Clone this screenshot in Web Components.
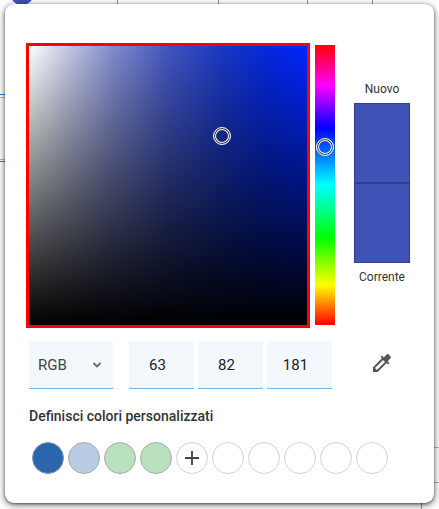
<!DOCTYPE html>
<html lang="it">
<head>
<meta charset="utf-8">
<title>Colori</title>
<style>
  html, body { margin: 0; height: 100%; overflow: hidden; background: #fff; }
  body { font-family: Roboto, "Liberation Sans", sans-serif; }
</style>
</head>
<body>
<page-backdrop>
  <color-dialog>
    <color-square slot="square"></color-square>
    <hue-strip slot="hue"></hue-strip>
    <color-preview slot="preview" color="#3f52b5"></color-preview>
    <mode-select slot="controls">RGB</mode-select>
    <color-field slot="controls">63</color-field>
    <color-field slot="controls">82</color-field>
    <color-field slot="controls">181</color-field>
    <eye-dropper slot="controls"></eye-dropper>
    <span slot="title">Definisci colori personalizzati</span>
    <color-swatch slot="swatches" color="#2b65ac" border="#8a9bb0"></color-swatch>
    <color-swatch slot="swatches" color="#b7cbe4" border="#adadad"></color-swatch>
    <color-swatch slot="swatches" color="#b9e1bd" border="#adadad"></color-swatch>
    <color-swatch slot="swatches" color="#b9e1bd" border="#adadad"></color-swatch>
    <color-swatch slot="swatches" add></color-swatch>
    <color-swatch slot="swatches"></color-swatch>
    <color-swatch slot="swatches"></color-swatch>
    <color-swatch slot="swatches"></color-swatch>
    <color-swatch slot="swatches"></color-swatch>
    <color-swatch slot="swatches"></color-swatch>
  </color-dialog>
</page-backdrop>

<script>
class PageBackdrop extends HTMLElement {
    constructor() {
        super();
        this.attachShadow({ mode: "open" });
        this.shadowRoot.innerHTML = `
        <style>
            :host { display: block; position: relative; width: 439px; height: 509px; overflow: hidden; background: #fff; }
            .v, .h, .dot { position: absolute; }
            .v { width: 1px; background: #8f8f8f; }
            .h { height: 1px; background: #b8b8b8; }
            .blue { background: #2f86c9; }
            .dot { left: 10px; top: -19px; width: 24px; height: 24px; border-radius: 50%; background: #3f52b5; }
            .dialog { position: absolute; left: 5px; top: 4px; }
        </style>
        <div class="dot"></div>
        <div class="v" style="left:117px;top:0;height:4px"></div>
        <div class="v" style="left:218px;top:0;height:4px"></div>
        <div class="v" style="left:307px;top:0;height:4px"></div>
        <div class="v" style="left:372px;top:0;height:4px"></div>
        <div class="v" style="left:421px;top:503px;height:6px"></div>
        <div class="h blue" style="left:0;top:94px;width:5px"></div>
        <div class="h blue" style="left:0;top:161px;width:5px"></div>
        <div class="h" style="left:0;top:97px;width:5px"></div>
        <div class="h" style="left:0;top:159px;width:5px"></div>
        <div class="h" style="left:434px;top:447px;width:5px"></div>
        <div class="h" style="left:434px;top:482px;width:5px"></div>
        <div class="dialog"><slot></slot></div>`;
    }
}

class ColorDialog extends HTMLElement {
    constructor() {
        super();
        this.attachShadow({ mode: "open" });
        this.shadowRoot.innerHTML = `
        <style>
            :host {
                display: block;
                box-sizing: border-box;
                width: 429px;
                height: 499px;
                padding: 39px 0 0 21px;
                background: #fff;
                border-radius: 9px;
                box-shadow: 0 1px 3px rgba(0,0,0,.5), 0 2px 7px 1px rgba(0,0,0,.4);
            }
            .top { display: flex; align-items: flex-start; }
            .controls { display: flex; align-items: flex-start; margin: 13px 0 0 3px; }
            h3 {
                margin: 18px 0 0 3px;
                font: 500 14px/18px Roboto, "Liberation Sans", sans-serif;
                color: #333;
            }
            .swatches { display: flex; gap: 4px; margin: 17px 0 0 6px; }
        </style>
        <div class="top">
            <slot name="square"></slot>
            <slot name="hue"></slot>
            <slot name="preview"></slot>
        </div>
        <div class="controls"><slot name="controls"></slot></div>
        <h3><slot name="title"></slot></h3>
        <div class="swatches"><slot name="swatches"></slot></div>`;
    }
}

class ColorSquare extends HTMLElement {
    constructor() {
        super();
        this.attachShadow({ mode: "open" });
        this.shadowRoot.innerHTML = `
        <style>
            :host {
                display: block;
                position: relative;
                box-sizing: border-box;
                width: 284px;
                height: 285px;
                border: 3px solid #ff0000;
                background:
                    linear-gradient(to top, #000, rgba(0,0,0,0)),
                    linear-gradient(to right, #fff 0%, #bec3e1 15%, #828ccd 30%, #4155be 50%, #1937c3 70%, #0528dc 85%, #0026ff 100%);
            }
            .thumb {
                position: absolute;
                left: 184px;
                top: 81px;
                width: 18px;
                height: 18px;
                box-sizing: border-box;
                border-radius: 50%;
                border: 1px solid #fff;
                box-shadow: inset 0 0 0 1px #222, inset 0 0 0 2px #fff;
            }
        </style>
        <div class="thumb"></div>`;
    }
}

class HueStrip extends HTMLElement {
    constructor() {
        super();
        this.attachShadow({ mode: "open" });
        this.shadowRoot.innerHTML = `
        <style>
            :host {
                display: block;
                position: relative;
                width: 20px;
                height: 280px;
                margin: 2px 19px 0 5px;
                background: linear-gradient(to bottom,
                    #f00 0%, #f0f 14.3%, #00f 29.6%, #0ff 50%, #0f0 69%, #ff0 85.7%, #f00 100%);
            }
            .thumb {
                position: absolute;
                left: 1px;
                top: 93px;
                width: 18px;
                height: 18px;
                box-sizing: border-box;
                border-radius: 50%;
                border: 1px solid #fff;
                box-shadow: inset 0 0 0 1px #222, inset 0 0 0 2px #fff;
            }
        </style>
        <div class="thumb"></div>`;
    }
}

class ColorPreview extends HTMLElement {
    constructor() {
        super();
        this.attachShadow({ mode: "open" });
        const color = this.getAttribute("color");
        this.shadowRoot.innerHTML = `
        <style>
            :host {
                display: block;
                width: 56px;
                margin-top: 38px;
                font: 12px/16px Roboto, "Liberation Sans", sans-serif;
                color: #333;
                text-align: center;
            }
            .box { box-sizing: border-box; background: ${color}; border: 1px solid #2f3f8f; }
            .box.first { height: 79px; border-bottom-width: 0; margin-top: 6px; }
            .box.second { height: 81px; border-top: 2px solid #2f3f8f; margin-bottom: 6px; }
            span { display: block; white-space: nowrap; }
        </style>
        <span>Nuovo</span>
        <div class="box first"></div>
        <div class="box second"></div>
        <span>Corrente</span>`;
    }
}

class ModeSelect extends HTMLElement {
    constructor() {
        super();
        this.attachShadow({ mode: "open" });
        this.shadowRoot.innerHTML = `
        <style>
            :host {
                display: flex;
                align-items: center;
                justify-content: space-between;
                box-sizing: border-box;
                width: 84px;
                height: 48px;
                margin-right: 16px;
                padding: 0 10px 0 9px;
                background: #f3f8fc;
                border-bottom: 1px solid #6fb8e8;
                border-radius: 3px 3px 0 0;
                font: 15px Roboto, "Liberation Sans", sans-serif;
                color: #444;
            }
            svg { width: 12px; height: 12px; display: block; }
        </style>
        <slot></slot>
        <svg viewBox="0 0 12 12"><path d="M2.5 4l3.5 3.5L9.500 4" fill="none" stroke="#666" stroke-width="1.8"/></svg>`;
    }
}

class ColorField extends HTMLElement {
    constructor() {
        super();
        this.attachShadow({ mode: "open" });
        this.shadowRoot.innerHTML = `
        <style>
            :host {
                display: flex;
                align-items: center;
                justify-content: center;
                box-sizing: border-box;
                width: 65px;
                height: 48px;
                margin-right: 4px;
                padding-right: 8px;
                background: #f3f8fc;
                border-bottom: 1px solid #6fb8e8;
                font: 15px Roboto, "Liberation Sans", sans-serif;
                color: #222;
            }
        </style>
        <slot></slot>`;
    }
}

class EyeDropper extends HTMLElement {
    constructor() {
        super();
        this.attachShadow({ mode: "open" });
        this.shadowRoot.innerHTML = `
        <style>
            :host { display: block; width: 24px; height: 24px; margin: 10px 0 0 34px; }
            svg { display: block; width: 24px; height: 24px; }
        </style>
        <svg viewBox="0 0 24 24"><path fill="#555" d="M20.71 5.63l-2.34-2.34c-.39-.39-1.02-.39-1.41 0l-3.12 3.12-1.93-1.91-1.41 1.41 1.42 1.42L3 16.25V21h4.75l8.92-8.92 1.42 1.42 1.41-1.41-1.92-1.92 3.12-3.12c.4-.4.4-1.03.01-1.42zM6.92 19L5 17.08l8.06-8.06 1.92 1.92L6.92 19z"/></svg>`;
    }
}

class ColorSwatch extends HTMLElement {
    constructor() {
        super();
        this.attachShadow({ mode: "open" });
        const color = this.getAttribute("color") || "#fff";
        const border = this.getAttribute("border") || "#d2d2d2";
        const plus = this.hasAttribute("add")
            ? `<svg viewBox="0 0 32 32"><path d="M16 8.5v15M8.5 16h15" stroke="#444" stroke-width="2" fill="none"/></svg>`
            : "";
        this.shadowRoot.innerHTML = `
        <style>
            :host {
                display: block;
                box-sizing: border-box;
                width: 32px;
                height: 32px;
                border-radius: 50%;
                background: ${color};
                border: 1px solid ${border};
            }
            svg { display: block; width: 30px; height: 30px; }
        </style>
        ${plus}`;
    }
}

customElements.define("page-backdrop", PageBackdrop);
customElements.define("color-dialog", ColorDialog);
customElements.define("color-square", ColorSquare);
customElements.define("hue-strip", HueStrip);
customElements.define("color-preview", ColorPreview);
customElements.define("mode-select", ModeSelect);
customElements.define("color-field", ColorField);
customElements.define("eye-dropper", EyeDropper);
customElements.define("color-swatch", ColorSwatch);
</script>
</body>
</html>
